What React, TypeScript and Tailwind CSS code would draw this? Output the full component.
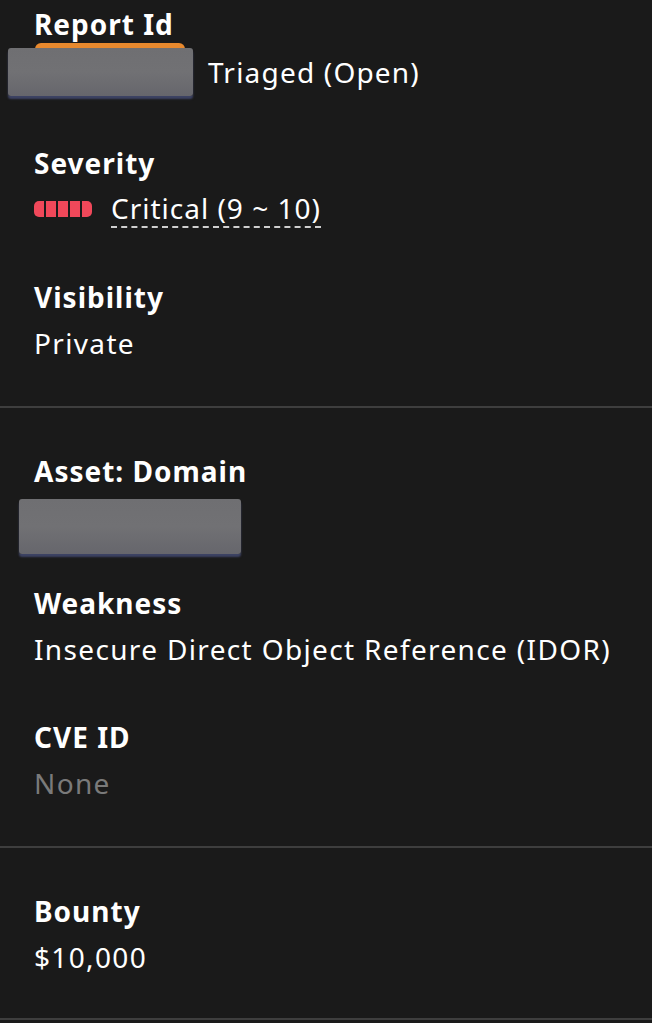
import React from "react";

function Label({ children }: { children: React.ReactNode }) {
  return <div className="h-[46px] flex items-center font-bold text-white tracking-[1px]">{children}</div>;
}

function Value({ children, muted }: { children: React.ReactNode; muted?: boolean }) {
  return (
    <div className={`h-[46px] flex items-center tracking-[1.35px] ${muted ? "text-[#7a7a7a]" : "text-white"}`}>
      {children}
    </div>
  );
}

function Redacted({ w, h, orange }: { w: number; h: number; orange?: boolean }) {
  return (
    <div className="relative" style={{ width: w, height: h }}>
      {orange && (
        <div className="absolute left-[27px] right-[8px] top-[-5px] h-[8px] rounded-t-[6px] bg-[#e8892e]" />
      )}
      <div className="absolute inset-0 rounded-[3px] bg-gradient-to-b from-[#6f6f72] via-[#717174] to-[#66666c] shadow-[0_3px_2px_rgba(90,100,160,0.55)]" />
    </div>
  );
}

function SeverityIcon() {
  return (
    <div className="flex h-[16px] w-[58px] overflow-hidden rounded-[5px] gap-[2px]">
      <div className="flex-1 bg-[#f0485a]" />
      <div className="flex-1 bg-[#f0485a]" />
      <div className="flex-1 bg-[#f0485a]" />
      <div className="flex-1 bg-[#f0485a]" />
      <div className="flex-1 bg-[#f0485a]" />
    </div>
  );
}

export default function App() {
  return (
    <div
      className="w-[652px] h-[1023px] bg-[#1a1a1a] text-[28px] overflow-hidden"
      style={{ fontFamily: "'Noto Sans', sans-serif" }}
    >
      <section className="px-[34px] pt-[1px] pb-[40px]">
        <Label>Report Id</Label>
        <div className="h-[50px] flex items-center -ml-[26px]">
          <Redacted w={185} h={48} orange />
          <span className="ml-[15px] text-white tracking-[1.2px]">Triaged (Open)</span>
        </div>
        <div className="mt-[43px]">
          <Label>Severity</Label>
          <div className="h-[46px] flex items-center">
            <SeverityIcon />
            <span className="ml-[19px] text-white tracking-[1px] border-b-2 border-dashed border-[#cfcfcf] leading-[36px]">
              Critical (9 ~ 10)
            </span>
          </div>
        </div>
        <div className="mt-[42px]">
          <Label>Visibility</Label>
          <Value>Private</Value>
        </div>
      </section>
      <div className="h-[2px] bg-[#3e3e3e]" />
      <section className="px-[34px] pt-[40px] pb-[40px]">
        <Label>Asset: Domain</Label>
        <div className="pt-[5px] -ml-[15px]">
          <Redacted w={222} h={55} />
        </div>
        <div className="mt-[26px]">
          <Label>Weakness</Label>
          <Value>Insecure Direct Object Reference (IDOR)</Value>
        </div>
        <div className="mt-[42px]">
          <Label>CVE ID</Label>
          <Value muted>None</Value>
        </div>
      </section>
      <div className="h-[2px] bg-[#3e3e3e]" />
      <section className="px-[34px] pt-[40px] pb-[38px]">
        <Label>Bounty</Label>
        <Value>$10,000</Value>
      </section>
      <div className="h-[2px] bg-[#3e3e3e]" />
    </div>
  );
}
